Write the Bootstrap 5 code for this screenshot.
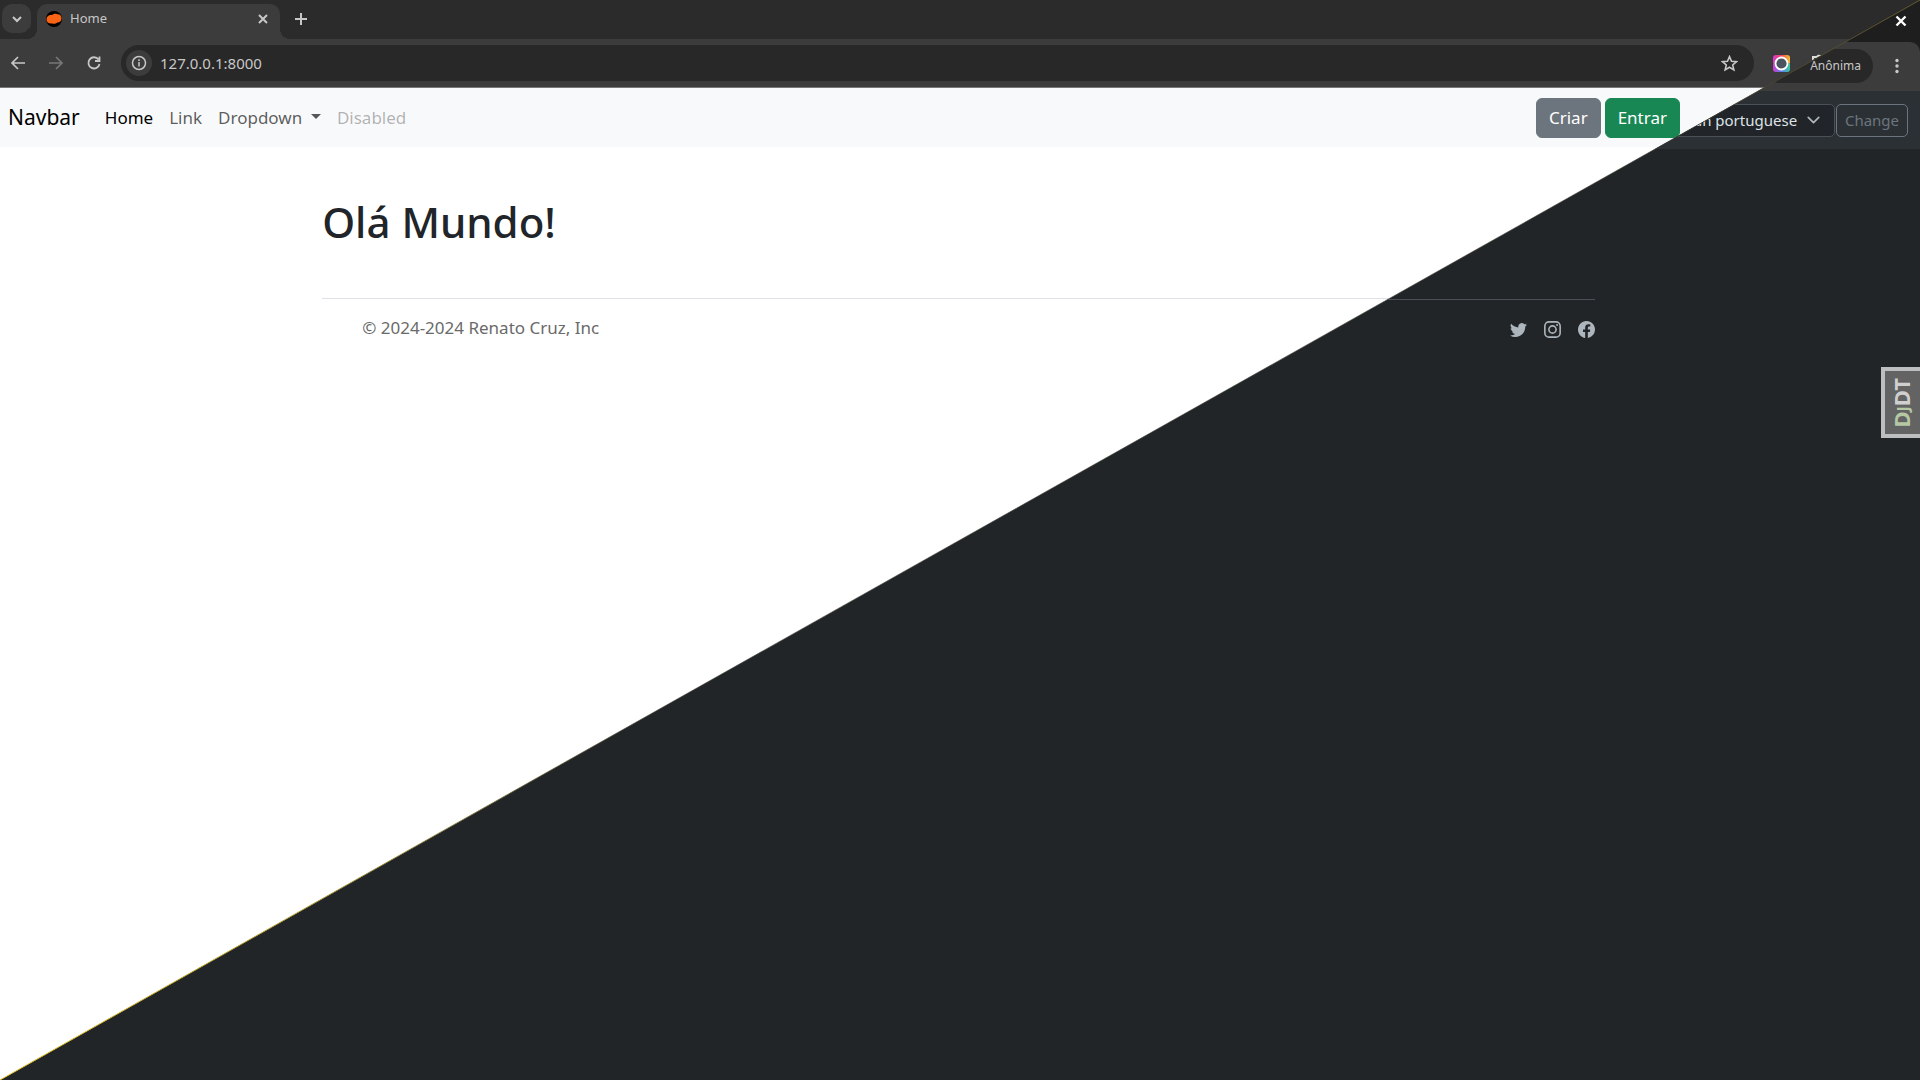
<!DOCTYPE html>
<html lang="pt-br">
<head>
<meta charset="utf-8">
<meta name="viewport" content="width=device-width, initial-scale=1">
<title>Home</title>
<link rel="stylesheet" href="https://cdn.jsdelivr.net/npm/bootstrap@5.3.0/dist/css/bootstrap.min.css">
<style>
body { font-family: "Noto Sans", sans-serif; background: #fff; }
.stage { min-height: 100vh; }
/* the dark theme lies over the light one, cut along the diagonal */
.theme-layer { position: absolute; inset: 0; }
.theme-dark { clip-path: polygon(100% 0, 100% 100%, 0 100%); background: #212528; }
.theme-edge { position: absolute; inset: 0; width: 100%; height: 100%; pointer-events: none; }
.theme-edge line { vector-effect: non-scaling-stroke; }
.tabstrip { height: 39px; background: #2b2b2b; padding: 0 2px; }
.theme-dark .tabstrip { height: 42px; background: #1e1e1e; padding: 0 13px; }
.plain-btn { border: 0; background: none; padding: 0; line-height: 0; color: #c7c7c7; }
.tab-search { width: 29px; height: 29px; border-radius: 10px; background: #3c3c3c; margin-top: 4px; }
.browser-tab { width: 243px; height: 35px; margin: 4px 0 0 6px; padding: 0 11px 5px 9px; border-radius: 10px 10px 0 0; background: #3c3c3c; color: #c7c7c7; font-size: 13px; position: relative; }
.browser-tab::before, .browser-tab::after { content: ""; position: absolute; bottom: 0; width: 10px; height: 10px; }
.browser-tab::before { left: -10px; background: radial-gradient(circle at 0 0, #2b2b2b 10px, #3c3c3c 10px); }
.browser-tab::after { right: -10px; background: radial-gradient(circle at 100% 0, #2b2b2b 10px, #3c3c3c 10px); }
.new-tab { margin: 13px 0 0 15px; }
.toolbar-row { height: 49px; background: #3c3c3c; padding: 0 16px 0 10px; border-bottom: 1px solid #777; }
.history-btns { gap: 22px; }
.theme-dark .toolbar-row { border-bottom: 0; border-top-right-radius: 10px; padding: 0 15px 2px; }
.theme-dark .toolbar-wrap { background: #1e1e1e; }
.address { height: 36px; margin-left: 19px; padding: 0 16px 0 5px; border-radius: 18px; background: #282828; }
.address input { background: none; border: 0; color: #c7c7c7; font-size: 15px; outline: 0; padding: 0; }
.site-info { width: 26px; height: 26px; border-radius: 50%; background: #3c3c3c; margin-right: 8px; }
.incognito { height: 34px; width: 110px; border-radius: 17px; background: #282828; color: #c7c7c7; font-size: 12px; padding-right: 12px; margin-right: 16px; }
.ext-slot { width: 150px; padding-left: 19px; }
.site-nav { height: 59px; padding: 0 8px; font-size: 17px; }
.site-nav .navbar-brand { font-size: 21px; margin-right: 17px; }
.theme-dark .site-nav { background: #2b3035; height: 58px; padding: 0 12px; }
.nav-actions { padding-right: 232px; gap: 4px; }
.nav-actions .btn { height: 40px; font-size: 17px; }
.lang-form { gap: 1px; }
.lang-form select, .lang-form button { height: 33px; border-radius: 5px; font-size: 15px; }
.lang-form select { width: 200px; line-height: 21px; padding: 5px 32px 5px 15px; border: 1px solid #495057; background-color: #212529; color: #dee2e6; background-position: right 12px center; background-size: 17px 14px; }
.lang-form button { width: 72px; border: 1px solid #6c757d; color: #6c757d; background: none; padding: 0; }
.page-col { width: 66.3%; margin-left: 16.78%; }
.site-main { padding-top: 49px; }
.site-main h1 { font-size: 42px; line-height: 52px; margin: 0 0 50px; color: #212529; }
.site-foot { border-top: 1px solid #dee2e6; padding: 15px 0; }
.site-foot p { font-size: 17px; line-height: 28px; color: #6a6a6a; margin: 0 0 0 40px; }
.theme-dark .site-foot { border-color: #495057; margin-top: 150px; padding-top: 21px; }
.social { gap: 17px; }
.social a { color: #adb5bd; line-height: 0; }
.djdt { position: absolute; right: 0; top: 367px; width: 39px; height: 71px; background: #636363; border: 4px solid #bcbec0; border-right: 0; padding-right: 1px; }
.djdt span { writing-mode: vertical-rl; transform: rotate(180deg); color: #cfcfcf; font: 700 22px/30px "Noto Sans", sans-serif; }
.djdt i { font-style: normal; color: #b5c7a3; }
.djdt i + i { font-size: 16px; vertical-align: -2px; }
</style>
</head>
<body>
<div class="stage position-relative overflow-hidden">
  <div class="theme-light">
    <header>
      <div class="tabstrip d-flex align-items-start">
        <button class="plain-btn tab-search d-flex align-items-center justify-content-center" aria-label="Tabs"><svg width="12" height="12" viewBox="0 0 12 12" fill="none" stroke="currentColor" stroke-width="2"><path d="M2 4l4 4 4-4"/></svg></button>
        <div class="browser-tab d-flex align-items-center">
          <svg width="16" height="16" viewBox="0 0 16 16"><circle cx="8" cy="8" r="8" fill="#000"/><path d="M.5 8.500C.5 5 3 3.500 6 4c2-1.500 4-1.500 5-.8 3-.4 4.500 1.800 4.500 4 0 3-2 4.300-4 4.300-2 1.500-4 1.500-5 1C3 13 .5 11.500.5 8.500z" fill="#f96316"/></svg>
          <span class="ms-2 flex-grow-1">Home</span>
          <button class="plain-btn" aria-label="Close tab"><svg width="12" height="12" viewBox="0 0 12 12" stroke="currentColor" stroke-width="2"><path d="M2 2l8 8M10 2l-8 8"/></svg></button>
        </div>
        <button class="plain-btn new-tab" aria-label="New tab"><svg width="12" height="12" viewBox="0 0 12 12" stroke="currentColor" stroke-width="2"><path d="M6 0v12M0 6h12"/></svg></button>
      </div>
      <div class="toolbar-row d-flex align-items-center">
        <div class="history-btns d-flex">
          <button class="plain-btn" aria-label="Back"><svg width="16" height="16" viewBox="0 0 16 16" fill="none" stroke="currentColor" stroke-width="1.7"><path d="M15 8H3M8 2L2 8l6 6"/></svg></button>
          <button class="plain-btn" aria-label="Forward"><svg width="16" height="16" viewBox="0 0 16 16" fill="none" stroke="#777" stroke-width="1.7"><path d="M1 8h12M8 2l6 6-6 6"/></svg></button>
          <button class="plain-btn" aria-label="Reload"><svg width="16" height="16" viewBox="0 0 16 16" fill="none" stroke="currentColor" stroke-width="1.8"><path d="M13.500 9A5.600 5.600 0 1 1 12.500 4.500M13.500 1.500v4.500H9"/></svg></button>
        </div>
        <div class="address d-flex align-items-center flex-grow-1">
          <span class="site-info d-flex align-items-center justify-content-center"><svg width="16" height="16" viewBox="0 0 16 16" fill="none" stroke="#c7c7c7" stroke-width="1.500"><circle cx="8" cy="8" r="6.500"/><path d="M8 7v4.500M8 4.300v1.600"/></svg></span>
          <input class="flex-grow-1" type="text" aria-label="Address" value="127.0.0.1:8000">
          <button class="plain-btn" aria-label="Bookmark"><svg width="17" height="17" viewBox="0 0 16 16" fill="none" stroke="currentColor" stroke-width="1.500"><path d="M8 1.500l1.900 4.400 4.700.4-3.600 3.100 1.100 4.600L8 11.500 3.900 14 5 9.400 1.400 6.300l4.700-.4z"/></svg></button>
        </div>
        <div class="ext-slot d-flex align-items-center">
          <svg width="50" height="20" viewBox="0 0 50 20">
            <defs>
              <linearGradient id="camTop"><stop offset="0" stop-color="#d63bd0"/><stop offset=".5" stop-color="#f0455a"/><stop offset="1" stop-color="#f9c030"/></linearGradient>
              <linearGradient id="camBottom"><stop offset="0" stop-color="#d63bd0"/><stop offset=".5" stop-color="#5b7df0"/><stop offset="1" stop-color="#35d0a0"/></linearGradient>
            </defs>
            <path d="M0 10.500V5a3 3 0 0 1 3-3h11a3 3 0 0 1 3 3v5.500z" fill="url(#camTop)"/>
            <path d="M0 10.500h17V16a3 3 0 0 1-3 3H3a3 3 0 0 1-3-3z" fill="url(#camBottom)"/>
            <circle cx="8.500" cy="10.500" r="6" fill="#4a5560" stroke="#fff" stroke-width="1.800"/>
            <path d="M22 18h3l1-2" fill="none" stroke="#ddd" stroke-width="2"/>
            <path d="M40 7V4h4q1-2 3-1h2" fill="none" stroke="#ddd" stroke-width="2"/>
          </svg>
        </div>
      </div>
    </header>
    <nav class="navbar navbar-expand bg-body-tertiary site-nav">
      <a class="navbar-brand" href="#">Navbar</a>
      <ul class="navbar-nav me-auto">
        <li class="nav-item"><a class="nav-link active" href="#">Home</a></li>
        <li class="nav-item"><a class="nav-link" href="#">Link</a></li>
        <li class="nav-item"><a class="nav-link dropdown-toggle" href="#">Dropdown </a></li>
        <li class="nav-item"><a class="nav-link disabled" aria-disabled="true">Disabled</a></li>
      </ul>
      <div class="nav-actions d-flex"><button class="btn btn-secondary">Criar</button><button class="btn btn-success">Entrar</button></div>
    </nav>
    <main class="site-main page-col">
      <h1>Olá Mundo!</h1>
      <footer class="site-foot"><p>© 2024-2024 Renato Cruz, Inc</p></footer>
    </main>
  </div>
  <div class="theme-layer theme-dark" data-bs-theme="dark">
    <div class="tabstrip d-flex align-items-center justify-content-end">
      <button class="plain-btn text-white" aria-label="Close window"><svg width="12" height="12" viewBox="0 0 12 12" stroke="currentColor" stroke-width="2.400"><path d="M1.500 1.500l9 9M10.500 1.500l-9 9"/></svg></button>
    </div>
    <div class="toolbar-wrap">
      <div class="toolbar-row d-flex align-items-center justify-content-end">
        <div class="incognito d-flex align-items-center justify-content-end">Anônima</div>
        <button class="plain-btn" aria-label="Menu"><svg width="16" height="16" viewBox="0 0 16 16" fill="currentColor"><circle cx="8" cy="2.500" r="1.700"/><circle cx="8" cy="8" r="1.700"/><circle cx="8" cy="13.500" r="1.700"/></svg></button>
      </div>
    </div>
    <nav class="site-nav d-flex align-items-center justify-content-end">
      <form class="lang-form d-flex">
        <select class="form-select" aria-label="Language"><option>Brazilian portuguese</option></select>
        <button type="button">Change</button>
      </form>
    </nav>
    <footer class="site-foot page-col">
      <div class="social d-flex justify-content-end">
        <a href="#" aria-label="Twitter"><svg width="17" height="17" viewBox="0 0 16 16" fill="currentColor"><path d="M5.026 15c6.038 0 9.341-5.003 9.341-9.334 0-.14 0-.282-.006-.422A6.685 6.685 0 0 0 16 3.542a6.658 6.658 0 0 1-1.889.518 3.301 3.301 0 0 0 1.447-1.817 6.533 6.533 0 0 1-2.087.793A3.286 3.286 0 0 0 7.875 6.030a9.325 9.325 0 0 1-6.767-3.429 3.289 3.289 0 0 0 1.018 4.382A3.323 3.323 0 0 1 .64 6.575v.045a3.288 3.288 0 0 0 2.632 3.218 3.203 3.203 0 0 1-.865.115 3.230 3.230 0 0 1-.614-.057 3.283 3.283 0 0 0 3.067 2.277A6.588 6.588 0 0 1 .78 13.580a6.320 6.320 0 0 1-.78-.045A9.344 9.344 0 0 0 5.026 15z"/></svg></a>
        <a href="#" aria-label="Instagram"><svg width="17" height="17" viewBox="0 0 16 16" fill="none" stroke="currentColor" stroke-width="1.500"><rect x=".8" y=".8" width="14.400" height="14.400" rx="4"/><circle cx="8" cy="8" r="3.400"/><circle cx="12.300" cy="3.700" r=".96" fill="currentColor" stroke="none"/></svg></a>
        <a href="#" aria-label="Facebook"><svg width="17" height="17" viewBox="0 0 16 16" fill="currentColor"><path d="M16 8.049c0-4.446-3.582-8.050-8-8.050C3.580 0-.002 3.603-.002 8.050c0 4.017 2.926 7.347 6.750 7.951v-5.625h-2.030V8.050H6.750V6.275c0-2.017 1.195-3.131 3.022-3.131.876 0 1.791.157 1.791.157v1.980h-1.009c-.993 0-1.303.621-1.303 1.258v1.510h2.218l-.354 2.326H9.250V16c3.824-.604 6.750-3.934 6.750-7.951z"/></svg></a>
      </div>
    </footer>
    <a class="djdt d-flex align-items-center justify-content-center text-decoration-none" href="#"><span><i>D</i><i>J</i>DT</span></a>
  </div>
  <svg class="theme-edge" viewBox="0 0 100 100" preserveAspectRatio="none" aria-hidden="true">
    <defs><linearGradient id="edge" gradientUnits="userSpaceOnUse" x1="0" y1="0" x2="100" y2="0"><stop offset="0" stop-color="#e8c020"/><stop offset=".15" stop-color="#b09828"/><stop offset=".35" stop-color="#3a3930" stop-opacity=".6"/><stop offset=".85" stop-color="#3a3930" stop-opacity=".6"/><stop offset="1" stop-color="#665b30"/></linearGradient></defs>
    <line x1="0" y1="100" x2="100" y2="0" stroke="url(#edge)" stroke-width="1"/>
  </svg>
</div>
<script src="https://cdn.jsdelivr.net/npm/bootstrap@5.3.0/dist/js/bootstrap.bundle.min.js"></script>
</body>
</html>
